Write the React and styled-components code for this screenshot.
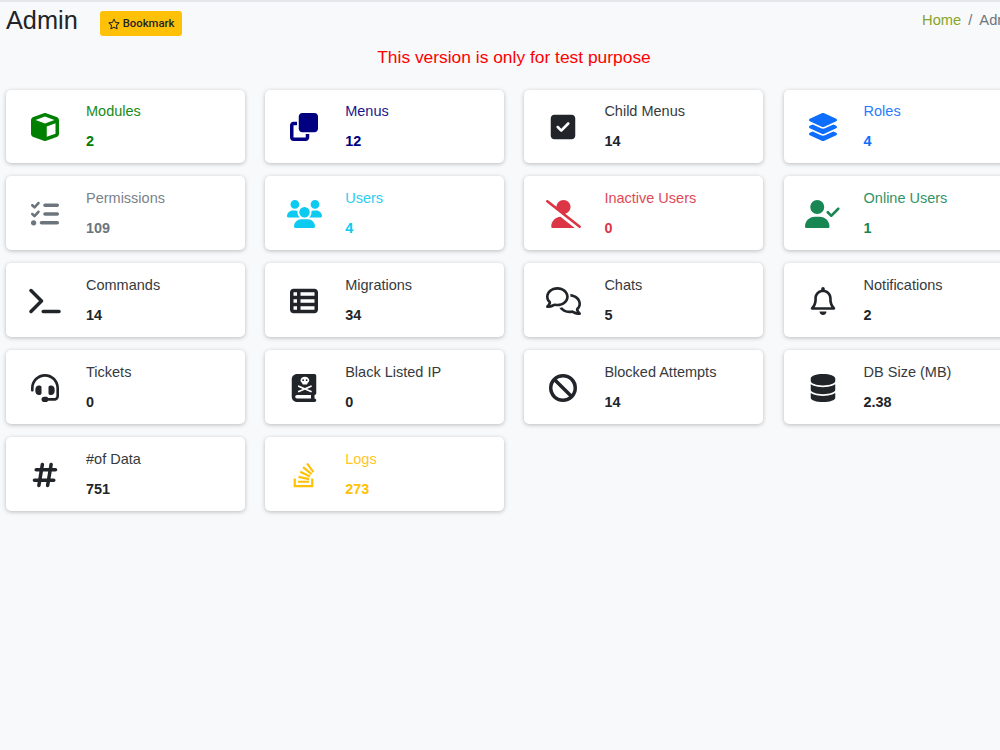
import React from "react";
import styled, { createGlobalStyle } from "styled-components";
import {
  FaCube,
  FaClone,
  FaSquareCheck,
  FaLayerGroup,
  FaListCheck,
  FaUsers,
  FaUserSlash,
  FaUserCheck,
  FaTerminal,
  FaTableList,
  FaRegComments,
  FaRegBell,
  FaHeadset,
  FaBookSkull,
  FaBan,
  FaDatabase,
  FaHashtag,
  FaStackOverflow,
  FaRegStar,
} from "react-icons/fa6";

const GlobalStyle = createGlobalStyle`
  html, body {
    margin: 0;
    height: 100%;
    overflow: hidden;
    background: #f8f9fa;
  }
  body {
    font-family: "Liberation Sans", Arial, sans-serif;
    color: #212529;
  }
`;

const Page = styled.div`
  width: 1028px;
  height: 750px;
  box-sizing: border-box;
  border-top: 2px solid #e4e6e9;
  padding: 0 6px;
`;

const Header = styled.div`
  display: flex;
  align-items: flex-start;
  justify-content: space-between;
  height: 35px;
`;

const TitleRow = styled.div`
  display: flex;
  align-items: flex-start;
  gap: 22px;
`;

const Title = styled.h1`
  margin: 0;
  font-size: 25.3px;
  font-weight: 400;
  line-height: 37px;
  color: #212529;
`;

const BookmarkButton = styled.button`
  display: flex;
  align-items: center;
  gap: 3px;
  height: 25px;
  margin-top: 9px;
  padding: 0 8px;
  border: 0;
  border-radius: 3px;
  background: #ffc107;
  color: #212529;
  font-family: Roboto, sans-serif;
  font-size: 11.3px;
  font-weight: 500;
`;

const Breadcrumb = styled.nav`
  display: flex;
  gap: 7px;
  margin-top: 10px;
  margin-right: 1px;
  font-size: 14.7px;
  line-height: 17px;
  color: #6c757d;
`;

const Crumb = styled.a`
  color: #8aa32b;
`;

const Notice = styled.p`
  margin: 10px 0 0;
  text-align: center;
  font-size: 17.4px;
  line-height: 20px;
  color: #ff0000;
`;

const Grid = styled.div`
  display: grid;
  grid-template-columns: repeat(4, 238.5px);
  grid-auto-rows: 73.6px;
  column-gap: 20.7px;
  row-gap: 13.4px;
  margin-top: 22.5px;
`;

const Card = styled.div`
  display: flex;
  align-items: center;
  box-sizing: border-box;
  border-radius: 5px;
  background: #fff;
  box-shadow: 0 1px 4px rgba(0, 0, 0, 0.25);
  color: ${(props) => props.$color};
`;

const IconBox = styled.div`
  display: flex;
  align-items: center;
  justify-content: center;
  flex: none;
  width: 78px;
  margin-top: 1px;

  svg {
    flex: none;
    width: ${(props) => props.$width}px;
    height: 28px;
  }
`;

const Body = styled.div`
  display: flex;
  flex-direction: column;
  gap: 13px;
  margin-left: 2px;
`;

const Label = styled.span`
  font-size: 14.5px;
  line-height: 17px;
  opacity: 0.9;
`;

const Value = styled.span`
  font-size: 14.4px;
  font-weight: 700;
  line-height: 17px;
`;

const dark = "#212529";

const stats = [
  { label: "Modules", value: "2", color: "#008000", icon: FaCube },
  { label: "Menus", value: "12", color: "#000080", icon: FaClone },
  { label: "Child Menus", value: "14", color: dark, icon: FaSquareCheck },
  { label: "Roles", value: "4", color: "#0d6efd", icon: FaLayerGroup, width: 32 },
  { label: "Permissions", value: "109", color: "#6c757d", icon: FaListCheck },
  { label: "Users", value: "4", color: "#0dcaf0", icon: FaUsers, width: 35 },
  { label: "Inactive Users", value: "0", color: "#dc3545", icon: FaUserSlash, width: 35 },
  { label: "Online Users", value: "1", color: "#198754", icon: FaUserCheck, width: 35 },
  { label: "Commands", value: "14", color: dark, icon: FaTerminal, width: 32 },
  { label: "Migrations", value: "34", color: dark, icon: FaTableList },
  { label: "Chats", value: "5", color: dark, icon: FaRegComments, width: 35 },
  { label: "Notifications", value: "2", color: dark, icon: FaRegBell },
  { label: "Tickets", value: "0", color: dark, icon: FaHeadset },
  { label: "Black Listed IP", value: "0", color: dark, icon: FaBookSkull },
  { label: "Blocked Attempts", value: "14", color: dark, icon: FaBan },
  { label: "DB Size (MB)", value: "2.38", color: dark, icon: FaDatabase },
  { label: "#of Data", value: "751", color: dark, icon: FaHashtag },
  { label: "Logs", value: "273", color: "#ffc107", icon: FaStackOverflow },
];

const App = () => (
  <Page>
    <GlobalStyle />
    <Header>
      <TitleRow>
        <Title>Admin</Title>
        <BookmarkButton>
          <FaRegStar size={12} />
          Bookmark
        </BookmarkButton>
      </TitleRow>
      <Breadcrumb>
        <Crumb>Home</Crumb>
        <span>/</span>
        <span>Admin</span>
      </Breadcrumb>
    </Header>
    <Notice>This version is only for test purpose</Notice>
    <Grid>
      {stats.map(({ label, value, color, icon: Icon, width = 28 }) => (
        <Card key={label} $color={color}>
          <IconBox $width={width}>
            <Icon />
          </IconBox>
          <Body>
            <Label>{label}</Label>
            <Value>{value}</Value>
          </Body>
        </Card>
      ))}
    </Grid>
  </Page>
);

export default App;
